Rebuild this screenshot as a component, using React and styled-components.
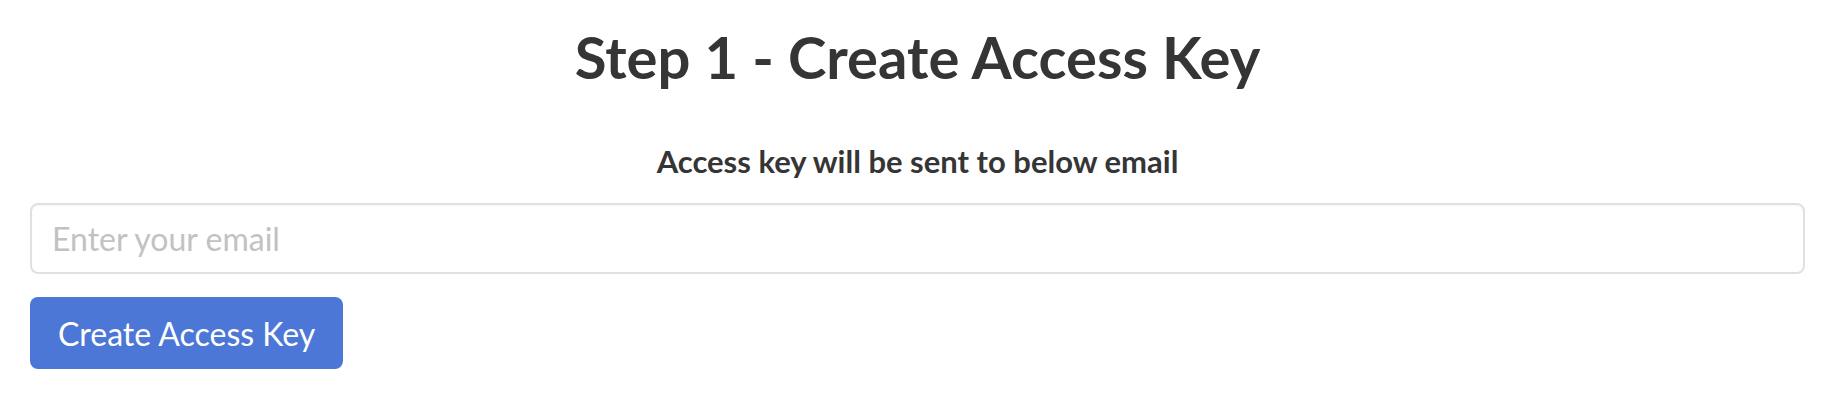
import React from 'react';
import styled, { createGlobalStyle } from 'styled-components';

const GlobalStyle = createGlobalStyle`
  body {
    margin: 0;
    background: #ffffff;
    font-family: Lato, 'Helvetica Neue', Arial, sans-serif;
    color: #333333;
  }
`;

const Page = styled.div`
  display: flex;
  flex-direction: column;
  padding: 20px 31px 0 30px;
`;

const Title = styled.h1`
  margin: 0;
  text-align: center;
  font-size: 58px;
  line-height: 74px;
  font-weight: 700;
  color: #353535;
`;

const Subtitle = styled.p`
  margin: 50px 0 0;
  text-align: center;
  font-size: 31px;
  line-height: 34px;
  font-weight: 700;
  color: #353535;
`;

const EmailInput = styled.input`
  box-sizing: border-box;
  margin-top: 25px;
  width: 100%;
  height: 71px;
  padding: 0 20px;
  border: 2px solid #e0e0e0;
  border-radius: 8px;
  box-shadow: inset 0 1px 2px rgba(0, 0, 0, 0.04);
  font-family: Lato, sans-serif;
  font-size: 32px;
  color: #333333;
  outline: none;

  &::placeholder {
    color: #c2c2c2;
  }
`;

const Button = styled.button`
  align-self: flex-start;
  margin-top: 23px;
  height: 72px;
  padding: 0 28px;
  border: none;
  border-radius: 8px;
  background: #4d77d6;
  color: #ffffff;
  font-family: Lato, sans-serif;
  font-size: 32px;
  cursor: pointer;
`;

const App = () => (
  <>
    <GlobalStyle />
    <Page>
      <Title>Step 1 - Create Access Key</Title>
      <Subtitle>Access key will be sent to below email</Subtitle>
      <EmailInput type="email" placeholder="Enter your email" />
      <Button>Create Access Key</Button>
    </Page>
  </>
);

export default App;
